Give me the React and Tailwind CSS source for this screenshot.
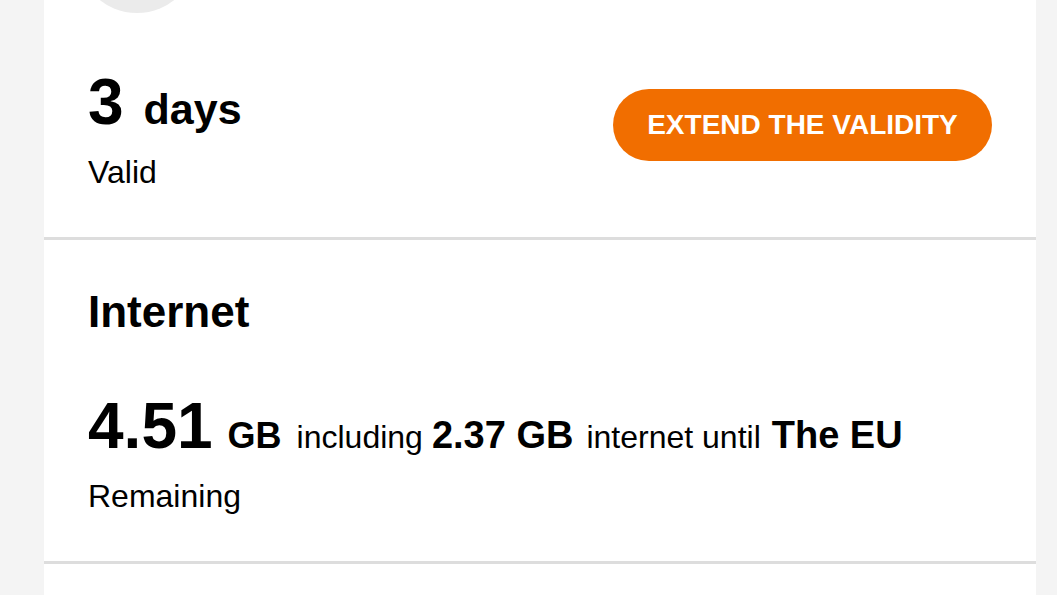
export default function App() {
  return (
    <div className="min-h-[595px] bg-[#f4f4f4] pl-[44px] pr-[21px] overflow-hidden" style={{ fontFamily: '"Liberation Sans", Arial, sans-serif' }}>
      <div className="bg-white text-black">
        {/* Validity */}
        <div className="px-[44px] border-b-[3px] border-[#dddddd] pb-[45px]">
          <div className="ml-[-11px] mt-[-107px] mb-[57px] h-[120px] w-[120px] rounded-full bg-[#ebebeb]" />
          <div className="flex items-start justify-between">
            <div>
              <div className="flex items-baseline font-bold">
                <span className="text-[64px] leading-none">3</span>
                <span className="ml-[20px] text-[43px] leading-none">days</span>
              </div>
              <div className="mt-[18px] text-[32px] leading-[40px]">Valid</div>
            </div>
            <button className="mt-[19px] h-[72px] w-[379px] rounded-full bg-[#f16e00] text-[28px] font-bold text-white">
              EXTEND THE VALIDITY
            </button>
          </div>
        </div>

        {/* Internet */}
        <div className="px-[44px] pt-[50px] pb-[45px] border-b-[3px] border-[#dddddd]">
          <h3 className="text-[44px] font-bold leading-none">Internet</h3>
          <div className="mt-[60px] flex items-baseline whitespace-nowrap">
            <span className="text-[64px] font-bold leading-none">4.51</span>
            <span className="ml-[15px] text-[36px] font-bold leading-none">GB</span>
            <span className="ml-[15px] text-[32px] leading-none">including</span>
            <span className="ml-[9px] text-[38px] font-bold leading-none">2.37 GB</span>
            <span className="ml-[13px] text-[32px] leading-none">internet until</span>
            <span className="ml-[11px] text-[38px] font-bold leading-none">The EU</span>
          </div>
          <div className="mt-[18px] text-[32px] leading-[40px]">Remaining</div>
        </div>

        <div className="h-[40px]" />
      </div>
    </div>
  );
}
